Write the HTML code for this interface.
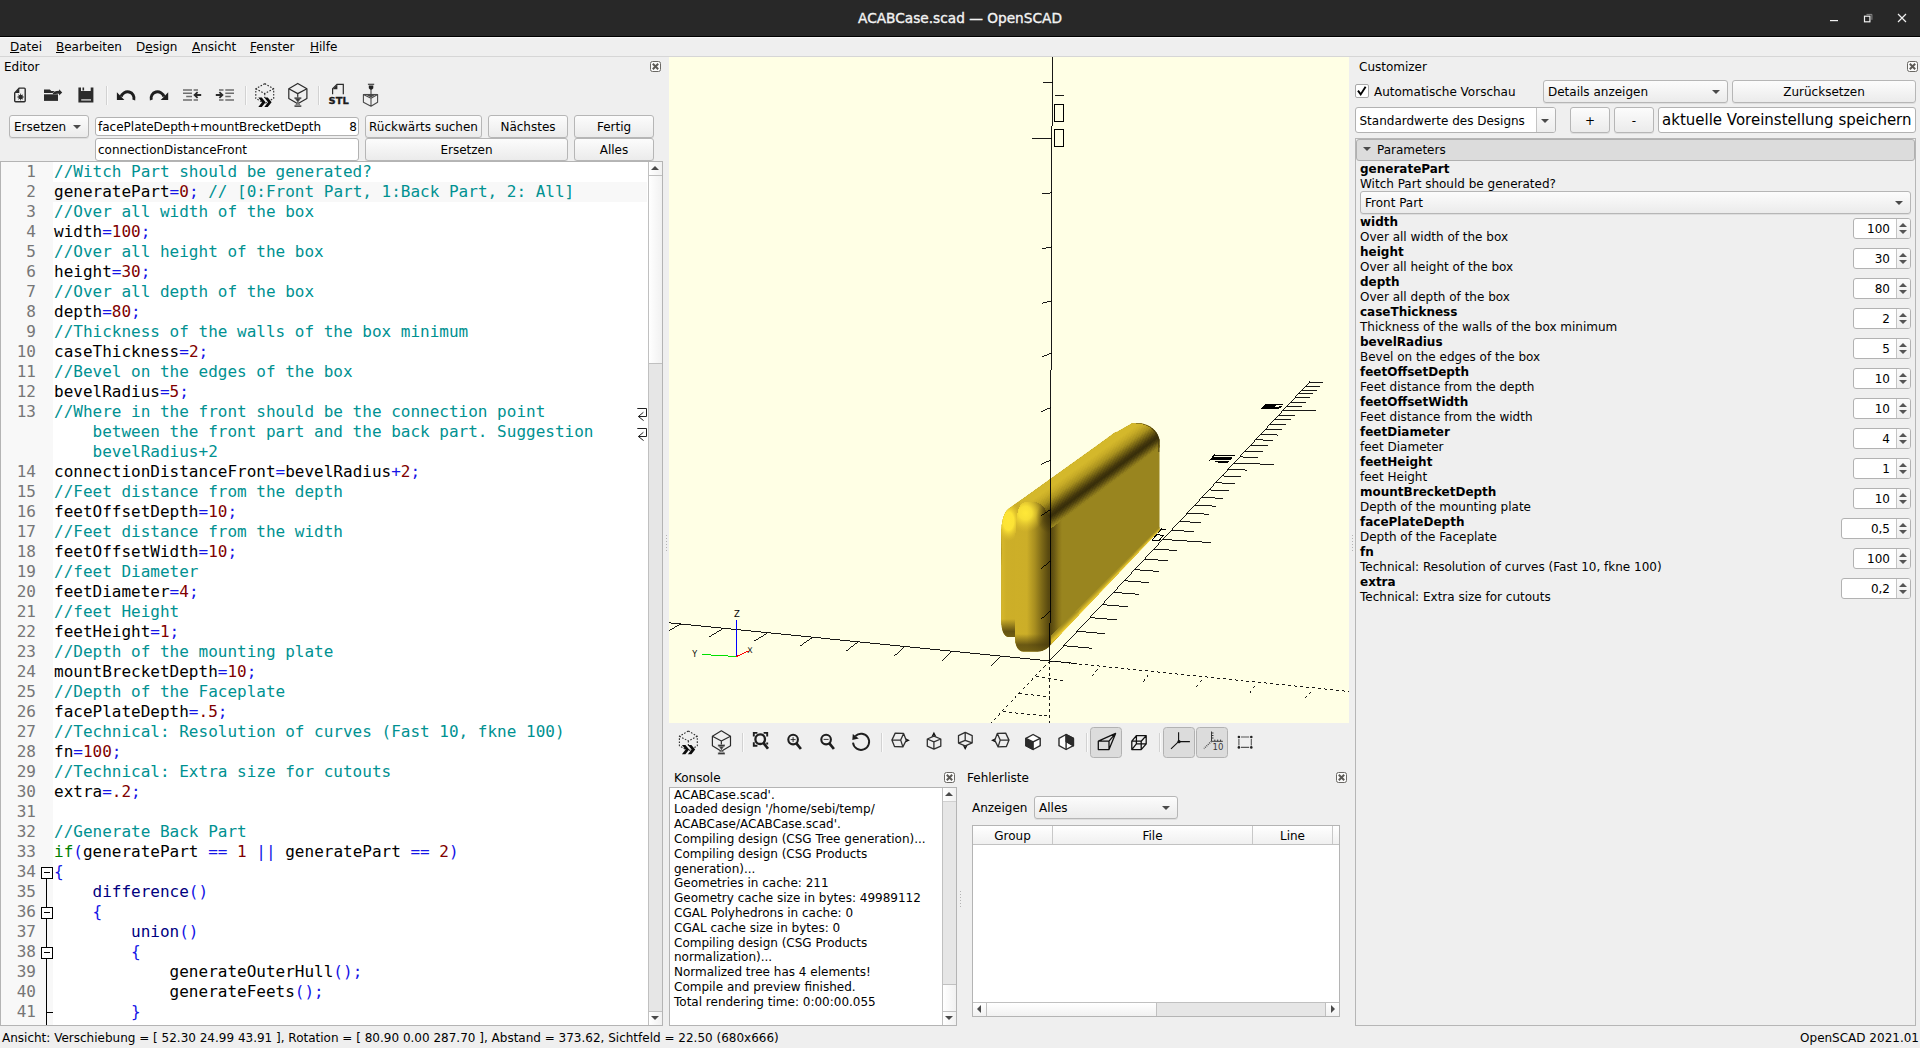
<!DOCTYPE html>
<html lang="de">
<head>
<meta charset="utf-8">
<title>ACABCase.scad — OpenSCAD</title>
<style>
*{box-sizing:border-box;margin:0;padding:0}
html,body{width:1920px;height:1048px;overflow:hidden;background:#efefef}
body{position:relative;font-family:"DejaVu Sans","Liberation Sans",sans-serif;font-size:12px;color:#000;line-height:15px}
.a{position:absolute;white-space:pre}
.t{position:absolute;white-space:pre;height:15px;line-height:15px;margin-top:1px}
u{text-decoration:underline;text-underline-offset:1px}
#titlebar{position:absolute;left:0;top:0;width:1920px;height:36px;background:#282828}
#titleline{position:absolute;left:0;top:36px;width:1920px;height:1px;background:#000}
#titletext{position:absolute;left:0;top:10px;width:1920px;text-align:center;color:#f3f3f3;font-family:"DejaVu Sans","Liberation Sans",sans-serif;font-size:13.7px;line-height:17px;-webkit-text-stroke:0.35px #f3f3f3}
#menusep{position:absolute;left:0;top:56px;width:1920px;height:1px;background:#d6d6d6}
.btn{position:absolute;border:1px solid #b6b6b6;border-radius:3px;background:linear-gradient(#fcfcfc,#ebebeb);box-shadow:0 1px 0 rgba(0,0,0,.07);text-align:center;white-space:pre;line-height:15px}
.edit{position:absolute;border:1px solid #b2b2b2;border-radius:3px;background:#fff;white-space:pre}
.closebox{position:absolute;width:11px;height:11px}
.frame{position:absolute;border:1px solid #b4b4b4;background:#fff}
.code{font-family:"DejaVu Sans Mono","Liberation Mono",monospace;font-size:16px;line-height:20px}
.ln{position:absolute;left:1px;width:34px;text-align:right;height:20px;color:#767676;white-space:pre}
.cl{position:absolute;left:53px;height:20px;white-space:pre;color:#000}
.c{color:#009191}.n{color:#7f0000}.o{color:#1414e6}.k{color:#007f00}.f{color:#00007f}
.tri-d{position:absolute;width:0;height:0;border-left:4px solid transparent;border-right:4px solid transparent;border-top:4px solid #4a4a4a}
.tri-u{position:absolute;width:0;height:0;border-left:4px solid transparent;border-right:4px solid transparent;border-bottom:4px solid #4a4a4a}
.pn{position:absolute;left:1360px;font-weight:bold;white-space:pre;height:15px;margin-top:1px}
.pd{position:absolute;left:1360px;white-space:pre;height:15px;margin-top:1px}
.spin{position:absolute;height:21px;border:1px solid #b2b2b2;border-radius:3px;background:#fff}
.spin .v{position:absolute;right:20px;top:3px;height:15px;white-space:pre;text-align:right}
.spin .s{position:absolute;right:0;top:0;width:14px;height:19px;border-left:1px solid #c4c4c4;background:linear-gradient(#fbfbfb,#ededed);border-radius:0 2px 2px 0}
</style>
</head>
<body>
<!-- window title bar -->
<div id="titlebar"></div><div id="titleline"></div>
<div id="titletext">ACABCase.scad — OpenSCAD</div>
<svg class="a" style="left:1826px;top:10px" width="90" height="16" viewBox="0 0 90 16">
<rect x="4" y="10" width="8" height="1.2" fill="#f0f0f0"/>
<path d="M40.5 4.4h5.4v5.4" fill="none" stroke="#8a8a8a" stroke-width="1"/>
<rect x="38.5" y="6.2" width="5.4" height="5.6" fill="none" stroke="#f0f0f0" stroke-width="1.2"/>
<path d="M72 4l8 8M80 4l-8 8" stroke="#f0f0f0" stroke-width="1.2" fill="none"/>
</svg>
<!-- menu bar -->
<div class="a" style="left:0;top:37px;width:1920px;height:1px;background:#fafafa"></div>
<div class="t" style="left:10px;top:39px"><u>D</u>atei</div>
<div class="t" style="left:56px;top:39px"><u>B</u>earbeiten</div>
<div class="t" style="left:136px;top:39px">D<u>e</u>sign</div>
<div class="t" style="left:192px;top:39px"><u>A</u>nsicht</div>
<div class="t" style="left:250px;top:39px"><u>F</u>enster</div>
<div class="t" style="left:310px;top:39px"><u>H</u>ilfe</div>
<div id="menusep"></div>
<!-- status bar -->
<div class="t" style="left:2px;top:1030px">Ansicht: Verschiebung = [ 52.30 24.99 43.91 ], Rotation = [ 80.90 0.00 287.70 ], Abstand = 373.62, Sichtfeld = 22.50 (680x666)</div>
<div class="t" style="right:1px;top:1030px">OpenSCAD 2021.01</div>
<!-- editor toolbar -->
<svg class="a" style="left:0;top:78px" width="400" height="34" viewBox="0 78 400 34">
<g fill="none" stroke="#2b2b2b" stroke-width="1.4" stroke-linejoin="round" stroke-linecap="butt">
<!-- new -->
<path d="M19.3 88.1H24.2a1 1 0 0 1 1 1V100.7a1 1 0 0 1 -1 1H15.7a1 1 0 0 1 -1 -1V92.9Z"/>
<path d="M19.3 88.6V92.9H15.2Z" fill="#2b2b2b" stroke="none"/>
<circle cx="20.6" cy="97" r="2.3" fill="#2b2b2b" stroke="none"/>
<path d="M20.6 93.6V100.4M17.2 97H24M18.2 94.6L23 99.4M23 94.6L18.2 99.4" stroke-width="0.8"/>
<!-- open -->
<path d="M44 89.4H49.8L51.3 90.9H54.6L52.6 93H44Z" fill="#2b2b2b" stroke="none"/>
<path d="M44 94.3H58V100.9H44Z" fill="#2b2b2b" stroke="none"/>
<path d="M52.7 93.6C53.4 91.7 55.2 90.8 59.1 90.7V89.2L62.2 92.4L59.1 95.4V93.8C56.2 93.8 54.8 93.9 53.5 94.5Z" fill="#2b2b2b" stroke="none"/>
<!-- save -->
<path d="M78.4 87.4H81V91.1H90.7V87.4H93.4V102.4H78.4Z" fill="#2b2b2b" stroke="none"/>
<rect x="82.5" y="87.5" width="1.6" height="3" fill="#2b2b2b" stroke="none"/>
<rect x="81.2" y="99.2" width="9.8" height="1.4" fill="#cfcfcf" stroke="none"/>
</g>
<!-- separators -->
<g>
<rect x="106" y="86" width="1" height="19" fill="#d2d2d2"/><rect x="107" y="86" width="1" height="19" fill="#fafafa"/>
<rect x="245" y="86" width="1" height="19" fill="#d2d2d2"/><rect x="246" y="86" width="1" height="19" fill="#fafafa"/>
<rect x="318" y="86" width="1" height="19" fill="#d2d2d2"/><rect x="319" y="86" width="1" height="19" fill="#fafafa"/>
</g>
<!-- undo / redo -->
<g fill="none" stroke="#1e1e1e" stroke-width="2.9">
<path d="M121.2 96.6A6.2 6.2 0 0 1 133.8 100"/>
<path d="M163.9 96.6A6.2 6.2 0 0 0 151.3 100"/>
</g>
<path d="M116.9 92.2V99.9H124.4Z" fill="#1e1e1e"/>
<path d="M168.2 92.2V99.9H160.7Z" fill="#1e1e1e"/>
<!-- unindent -->
<g stroke="#6e6e6e" stroke-width="1.5" fill="none">
<path d="M183 90H192M193.6 90H198M183 93.3H192M186.2 96.5H192M183 99.9H192M193.6 99.9H198"/>
<path d="M225.3 90H234M219 90H223.5M225.3 93.3H234M225.3 96.5H230.8M225.3 99.9H234M219 99.9H223.5"/>
</g>
<g stroke="#2b2b2b" stroke-width="1.8" fill="none">
<path d="M201.2 95H195M197.6 92.2L194.6 95L197.6 97.8"/>
<path d="M215.8 95H222M219.4 92.2L222.4 95L219.4 97.8"/>
</g>
<!-- preview -->
<g fill="none" stroke="#2b2b2b" stroke-width="1.1" stroke-dasharray="1.6 1.5">
<path d="M264.75 83.6L273.7 88.8V98.4L264.75 103.6L255.8 98.4V88.8Z"/>
<path d="M255.8 88.8L264.75 93.6L273.7 88.8M264.75 93.6V98"/>
</g>
<path d="M258.3 97.6H261.8L265.6 102.2L261.8 106.9H258.3L262 102.2ZM264.3 97.6H267.8L271.6 102.2L267.8 106.9H264.3L268 102.2Z" fill="#0c0c0c"/>
<!-- render -->
<g fill="none" stroke="#2b2b2b" stroke-width="1.2" stroke-linejoin="round">
<path d="M297.75 83.4L306.9 88.8V98.4L297.75 103.8L288.8 98.4V88.8Z"/>
<path d="M288.8 88.8L297.75 93.6L306.9 88.8M297.75 93.6V98"/>
</g>
<path d="M294.3 97.2H301.4V99H294.3ZM294.3 105.2H301.4V107H294.3Z" fill="#2b2b2b" stroke="#efefef" stroke-width="0.4"/><path d="M295.6 99H300.1L297.85 102.1Z" fill="#3a3a3a"/><path d="M297.85 102.1L300.1 105.2H295.6Z" fill="#8a8a8a"/><path d="M295.6 99L300.1 105.2M300.1 99L295.6 105.2" stroke="#555" stroke-width="0.7" fill="none"/>
<!-- STL -->
<path d="M332.6 94.3V88.8L337 84.4H343.3V94.3" fill="none" stroke="#2b2b2b" stroke-width="1.2"/>
<path d="M337.4 84.6V89.2H332.8Z" fill="#2b2b2b"/>
<text x="328.6" y="104.3" font-family="DejaVu Sans,Liberation Sans,sans-serif" font-weight="bold" font-size="9.3" textLength="20.2" lengthAdjust="spacingAndGlyphs" fill="#1c1c1c" stroke="#1c1c1c" stroke-width="0.3">STL</text>
<!-- 3d print -->
<g fill="none" stroke="#4a4a4a" stroke-width="1.1" stroke-linejoin="round">
<path d="M363.4 94.5L371 98.2L377.6 94.5V102.2L371 106.2L363.4 102.2ZM371 98.2V106.2"/>
<path d="M363.4 94.5H377.6"/>
</g>
<path d="M365.6 94.6H375.6L371 97.4Z" fill="#4a4a4a"/>
<path d="M367.9 83.8H374.2V84.8H367.9ZM368.8 85.6H373.3V88.2L371.8 89.8H370.3L368.8 88.2Z" fill="#222"/>
<path d="M371 89.5V94.5" stroke="#333" stroke-width="1"/>
</svg>
<!-- editor dock -->
<div class="t" style="left:4px;top:59px">Editor</div>
<svg class="closebox" style="left:650px;top:61px" width="11" height="11" viewBox="0 0 11 11"><rect x="0.5" y="0.5" width="10" height="10" rx="2" ry="2" fill="#fbfbfb" stroke="#6a6864" stroke-width="1"/><path d="M2.8 2.8L8.2 8.2M8.2 2.8L2.8 8.2" stroke="#5c5a56" stroke-width="2" fill="none"/></svg>
<div class="btn" style="left:9px;top:115px;width:80px;height:23px;text-align:left;padding:4px 0 0 4px">Ersetzen</div><div class="tri-d" style="left:73px;top:125px"></div>
<div class="edit" style="left:95px;top:117px;width:264px;height:19px;padding:2px 0 0 2px;line-height:15px">facePlateDepth+mountBrecketDepth<span class="a" style="right:1px;top:2px">8</span></div>
<div class="edit" style="left:95px;top:138px;width:264px;height:23px;padding:4px 0 0 2px;line-height:15px">connectionDistanceFront</div>
<div class="btn" style="left:365px;top:115px;width:117px;height:23px;padding-top:4px">Rückwärts suchen</div>
<div class="btn" style="left:488px;top:115px;width:80px;height:23px;padding-top:4px">Nächstes</div>
<div class="btn" style="left:574px;top:115px;width:80px;height:23px;padding-top:4px">Fertig</div>
<div class="btn" style="left:365px;top:138px;width:203px;height:23px;padding-top:4px">Ersetzen</div>
<div class="btn" style="left:574px;top:138px;width:80px;height:23px;padding-top:4px">Alles</div>
<div class="frame code" style="left:0;top:161px;width:663px;height:865px;overflow:hidden">
<div class="a" style="left:0;top:0;width:52px;height:863px;background:#f8f8f8"></div>
<div class="a" style="left:52px;top:20px;width:594px;height:20px;background:#f8f8f8"></div>
<div class="ln" style="top:0px">1</div>
<div class="cl" style="top:0px"><span class="c">//Witch Part should be generated?</span></div>
<div class="ln" style="top:20px">2</div>
<div class="cl" style="top:20px">generatePart<span class="o">=</span><span class="n">0</span><span class="o">;</span> <span class="c">// [0:Front Part, 1:Back Part, 2: All]</span></div>
<div class="ln" style="top:40px">3</div>
<div class="cl" style="top:40px"><span class="c">//Over all width of the box</span></div>
<div class="ln" style="top:60px">4</div>
<div class="cl" style="top:60px">width<span class="o">=</span><span class="n">100</span><span class="o">;</span></div>
<div class="ln" style="top:80px">5</div>
<div class="cl" style="top:80px"><span class="c">//Over all height of the box</span></div>
<div class="ln" style="top:100px">6</div>
<div class="cl" style="top:100px">height<span class="o">=</span><span class="n">30</span><span class="o">;</span></div>
<div class="ln" style="top:120px">7</div>
<div class="cl" style="top:120px"><span class="c">//Over all depth of the box</span></div>
<div class="ln" style="top:140px">8</div>
<div class="cl" style="top:140px">depth<span class="o">=</span><span class="n">80</span><span class="o">;</span></div>
<div class="ln" style="top:160px">9</div>
<div class="cl" style="top:160px"><span class="c">//Thickness of the walls of the box minimum</span></div>
<div class="ln" style="top:180px">10</div>
<div class="cl" style="top:180px">caseThickness<span class="o">=</span><span class="n">2</span><span class="o">;</span></div>
<div class="ln" style="top:200px">11</div>
<div class="cl" style="top:200px"><span class="c">//Bevel on the edges of the box</span></div>
<div class="ln" style="top:220px">12</div>
<div class="cl" style="top:220px">bevelRadius<span class="o">=</span><span class="n">5</span><span class="o">;</span></div>
<div class="ln" style="top:240px">13</div>
<div class="cl" style="top:240px"><span class="c">//Where in the front should be the connection point </span></div>
<div class="cl" style="top:260px"><span class="c">    between the front part and the back part. Suggestion </span></div>
<div class="cl" style="top:280px"><span class="c">    bevelRadius+2</span></div>
<div class="ln" style="top:300px">14</div>
<div class="cl" style="top:300px">connectionDistanceFront<span class="o">=</span>bevelRadius<span class="o">+</span><span class="n">2</span><span class="o">;</span></div>
<div class="ln" style="top:320px">15</div>
<div class="cl" style="top:320px"><span class="c">//Feet distance from the depth</span></div>
<div class="ln" style="top:340px">16</div>
<div class="cl" style="top:340px">feetOffsetDepth<span class="o">=</span><span class="n">10</span><span class="o">;</span></div>
<div class="ln" style="top:360px">17</div>
<div class="cl" style="top:360px"><span class="c">//Feet distance from the width</span></div>
<div class="ln" style="top:380px">18</div>
<div class="cl" style="top:380px">feetOffsetWidth<span class="o">=</span><span class="n">10</span><span class="o">;</span></div>
<div class="ln" style="top:400px">19</div>
<div class="cl" style="top:400px"><span class="c">//feet Diameter</span></div>
<div class="ln" style="top:420px">20</div>
<div class="cl" style="top:420px">feetDiameter<span class="o">=</span><span class="n">4</span><span class="o">;</span></div>
<div class="ln" style="top:440px">21</div>
<div class="cl" style="top:440px"><span class="c">//feet Height</span></div>
<div class="ln" style="top:460px">22</div>
<div class="cl" style="top:460px">feetHeight<span class="o">=</span><span class="n">1</span><span class="o">;</span></div>
<div class="ln" style="top:480px">23</div>
<div class="cl" style="top:480px"><span class="c">//Depth of the mounting plate</span></div>
<div class="ln" style="top:500px">24</div>
<div class="cl" style="top:500px">mountBrecketDepth<span class="o">=</span><span class="n">10</span><span class="o">;</span></div>
<div class="ln" style="top:520px">25</div>
<div class="cl" style="top:520px"><span class="c">//Depth of the Faceplate</span></div>
<div class="ln" style="top:540px">26</div>
<div class="cl" style="top:540px">facePlateDepth<span class="o">=</span><span class="n">.5</span><span class="o">;</span></div>
<div class="ln" style="top:560px">27</div>
<div class="cl" style="top:560px"><span class="c">//Technical: Resolution of curves (Fast 10, fkne 100)</span></div>
<div class="ln" style="top:580px">28</div>
<div class="cl" style="top:580px">fn<span class="o">=</span><span class="n">100</span><span class="o">;</span></div>
<div class="ln" style="top:600px">29</div>
<div class="cl" style="top:600px"><span class="c">//Technical: Extra size for cutouts</span></div>
<div class="ln" style="top:620px">30</div>
<div class="cl" style="top:620px">extra<span class="o">=</span><span class="n">.2</span><span class="o">;</span></div>
<div class="ln" style="top:640px">31</div>
<div class="ln" style="top:660px">32</div>
<div class="cl" style="top:660px"><span class="c">//Generate Back Part</span></div>
<div class="ln" style="top:680px">33</div>
<div class="cl" style="top:680px"><span class="k">if</span><span class="o">(</span>generatePart <span class="o">==</span> <span class="n">1</span> <span class="o">||</span> generatePart <span class="o">==</span> <span class="n">2</span><span class="o">)</span></div>
<div class="ln" style="top:700px">34</div>
<div class="cl" style="top:700px"><span class="o">{</span></div>
<div class="ln" style="top:720px">35</div>
<div class="cl" style="top:720px">    <span class="f">difference</span><span class="o">()</span></div>
<div class="ln" style="top:740px">36</div>
<div class="cl" style="top:740px">    <span class="o">{</span></div>
<div class="ln" style="top:760px">37</div>
<div class="cl" style="top:760px">        <span class="f">union</span><span class="o">()</span></div>
<div class="ln" style="top:780px">38</div>
<div class="cl" style="top:780px">        <span class="o">{</span></div>
<div class="ln" style="top:800px">39</div>
<div class="cl" style="top:800px">            generateOuterHull<span class="o">();</span></div>
<div class="ln" style="top:820px">40</div>
<div class="cl" style="top:820px">            generateFeets<span class="o">();</span></div>
<div class="ln" style="top:840px">41</div>
<div class="cl" style="top:840px">        <span class="o">}</span></div>
<svg class="a" style="left:636px;top:245px" width="11" height="15" viewBox="0 0 11 15"><path d="M0.3 1.5H9.5V9.5H1.4M6.4 5.3L1.4 9.5L6.6 13.6" fill="none" stroke="#222" stroke-width="1"/></svg>
<svg class="a" style="left:636px;top:265px" width="11" height="15" viewBox="0 0 11 15"><path d="M0.3 1.5H9.5V9.5H1.4M6.4 5.3L1.4 9.5L6.6 13.6" fill="none" stroke="#222" stroke-width="1"/></svg>
<div class="a" style="left:45px;top:710px;width:1px;height:153px;background:#000"></div>
<div class="a" style="left:40px;top:705px;width:12px;height:12px;border:1px solid #000;background:#fff"></div><div class="a" style="left:43px;top:710px;width:6px;height:1px;background:#000"></div>
<div class="a" style="left:40px;top:745px;width:12px;height:12px;border:1px solid #000;background:#fff"></div><div class="a" style="left:43px;top:750px;width:6px;height:1px;background:#000"></div>
<div class="a" style="left:40px;top:785px;width:12px;height:12px;border:1px solid #000;background:#fff"></div><div class="a" style="left:43px;top:790px;width:6px;height:1px;background:#000"></div>
<div class="a" style="left:45px;top:850px;width:7px;height:1px;background:#000"></div>
<div class="a" style="left:647px;top:-1px;width:15px;height:865px;border:1px solid #c0c0c0;background:#e6e6e6"></div>
<div class="a" style="left:648px;top:0;width:13px;height:14px;background:linear-gradient(90deg,#fff,#f1f1f1);border-bottom:1px solid #c0c0c0"></div>
<div class="a" style="left:648px;top:14px;width:13px;height:188px;background:linear-gradient(90deg,#fff,#f1f1f1);border-bottom:1px solid #c0c0c0"></div>
<div class="a" style="left:648px;top:849px;width:13px;height:14px;background:linear-gradient(90deg,#fff,#f1f1f1);border-top:1px solid #c0c0c0"></div>
<div class="tri-u" style="left:650px;top:4px"></div><div class="tri-d" style="left:650px;top:854px"></div>
</div>
<!-- 3D viewport -->
<svg class="a" style="left:669px;top:57px" width="680" height="666" viewBox="669 57 680 666">
<rect x="669" y="57" width="680" height="666" fill="#ffffe5"/>
<path d="M1049.5 661L669 622.8M1000.4 656.2L991 665.6M951.5 651.7L942 660.8M903.5 646.9L893.5 655.8M857.7 642.3L846.2 651M811.9 637.9L800.4 645.8M767 633.3L754.2 641.2M723.3 628.5L709.2 636.9M680.6 624L668.8 630.8M1049.5 661L1310.5 380.9M1049.5 661L1076.5 663.7M1063.8 645.7L1092.4 648.3M1077.2 631.2L1105.1 633.7M1090 617.6L1117.1 619.9M1102 604.6L1128.4 606.8M1113.5 592.4L1139.2 594.4M1124.3 580.7L1149.4 582.7M1134.7 569.6L1159.1 571.5M1144.5 559.1L1168.3 560.8M1153.9 549L1177.2 550.6M1162.8 539.4L1211.4 542.6M1171.4 530.2L1193.6 531.6M1179.5 521.4L1201.3 522.8M1187.4 513L1208.7 514.3M1194.9 505L1215.7 506.2M1202.1 497.3L1222.5 498.4M1209 489.9L1229 490.9M1215.6 482.7L1235.2 483.7M1222 475.9L1241.2 476.8M1228.1 469.3L1247 470.1M1234 463L1273.6 464.5M1239.7 456.9L1257.9 457.5M1245.2 451L1263.1 451.6M1250.5 445.3L1268 445.8M1255.6 439.8L1272.8 440.3M1260.5 434.5L1277.5 435M1265.3 429.4L1282 429.8M1269.9 424.5L1286.3 424.8M1274.4 419.7L1290.5 419.9M1278.7 415L1294.6 415.2M1282.9 410.5L1316.3 410.9M1286.9 406.2L1302.3 406.3M1290.9 402L1306 402M1294.7 397.9L1309.6 397.9M1298.4 393.9L1313.1 393.9M1302 390L1316.5 390M1305.5 386.3L1319.8 386.3M1308.9 382.6L1323 382.6" fill="none" stroke="#000" stroke-width="0.9" shape-rendering="crispEdges"/>
<path d="M1049.5 661L1349 691.5M1097.5 669.4L1092.3 675.8M1148.5 674.6L1143.3 681.5M1201.7 680L1196.5 686.7M1254.8 685.6L1250.2 692.5M1310 691.5L1305.4 697.7M1049.5 661L1049.5 723M1049.5 661L991 723M1036 676L1065 681M1019.4 693.3L1049.6 697M1002.7 711.7L1046.5 716" fill="none" stroke="#000" stroke-width="0.9" shape-rendering="crispEdges" stroke-dasharray="3 3"/>
<path d="M1214 455.5H1235M1212 457.5H1232M1212 458.5H1232M1210 459.5H1231M1215 461.5H1229M1218 462.5H1228M1208.5 461.5L1215 454.5" fill="none" stroke="#000" stroke-width="1" shape-rendering="crispEdges"/>
<path d="M1265 404.5H1283M1264 405.5H1276M1263 406.5H1275M1279 406.5H1282M1262 407.5H1281M1261 408.5H1279" fill="none" stroke="#000" stroke-width="1" shape-rendering="crispEdges"/>
<path d="M1152 540L1157 534.5L1163.5 535.5L1159 540.5ZM1158 532.5L1161.5 529L1166 530" fill="none" stroke="#000" stroke-width="1" shape-rendering="crispEdges"/>
<defs>
<clipPath id="mclip"><path d="M1001.2 533C1001.6 520 1004 512.5 1008.6 508.7L1100 443.3L1114.7 432.6L1117.5 431.6L1132 423.2H1141C1150 424.5 1158 431 1159.5 440V530.5L1049.5 646C1046 650 1041 651.6 1037 651.6H1024C1019 651.6 1016.5 648 1015.3 642V637H1008C1004 636 1001.6 631 1001.2 622Z"/></clipPath>
<linearGradient id="l2" gradientUnits="userSpaceOnUse" x1="1015" y1="0" x2="1051" y2="0"><stop offset="0" stop-color="#cdaf28"/><stop offset=".33" stop-color="#ccae28"/><stop offset=".55" stop-color="#a88e20"/><stop offset=".75" stop-color="#7c6817"/><stop offset=".92" stop-color="#5a4a10"/><stop offset="1" stop-color="#54450e"/></linearGradient>
<linearGradient id="l1" gradientUnits="userSpaceOnUse" x1="1001" y1="0" x2="1016" y2="0"><stop offset="0" stop-color="#d8b82a"/><stop offset=".35" stop-color="#cdaf28"/><stop offset="1" stop-color="#ccae28"/></linearGradient>
<radialGradient id="h2" gradientUnits="userSpaceOnUse" cx="1025.5" cy="513" r="19"><stop offset="0" stop-color="#ffe838"/><stop offset=".35" stop-color="#ffe838" stop-opacity=".85"/><stop offset="1" stop-color="#e6c62e" stop-opacity="0"/></radialGradient>
<radialGradient id="h1" gradientUnits="userSpaceOnUse" cx="1008.5" cy="521" r="20" gradientTransform="translate(1008.5 521) scale(.6 1) translate(-1008.5 -521)"><stop offset="0" stop-color="#ffe636"/><stop offset=".45" stop-color="#ffe636" stop-opacity=".95"/><stop offset="1" stop-color="#e6c62e" stop-opacity="0"/></radialGradient>
<linearGradient id="b2" gradientUnits="userSpaceOnUse" x1="0" y1="634" x2="0" y2="652"><stop offset="0" stop-color="#4a3c0c" stop-opacity="0"/><stop offset=".6" stop-color="#4a3c0c" stop-opacity=".75"/><stop offset="1" stop-color="#6b5a12" stop-opacity=".9"/></linearGradient>
<linearGradient id="b1" gradientUnits="userSpaceOnUse" x1="0" y1="619" x2="0" y2="638"><stop offset="0" stop-color="#4a3c0c" stop-opacity="0"/><stop offset=".65" stop-color="#4a3c0c" stop-opacity=".8"/><stop offset="1" stop-color="#6b5a12" stop-opacity=".9"/></linearGradient>
<linearGradient id="be" gradientUnits="userSpaceOnUse" x1="1100" y1="584" x2="1105.5" y2="589.2"><stop offset="0" stop-color="#99851f"/><stop offset=".3" stop-color="#b89b23"/><stop offset=".6" stop-color="#d9ba2b"/><stop offset="1" stop-color="#f2d231"/></linearGradient>
<linearGradient id="ve" gradientUnits="userSpaceOnUse" x1="1050.5" y1="0" x2="1062" y2="0"><stop offset="0" stop-color="#54450e"/><stop offset=".35" stop-color="#6b5a14"/><stop offset=".7" stop-color="#8a7519"/><stop offset="1" stop-color="#99851f"/></linearGradient>
<radialGradient id="sh" gradientUnits="userSpaceOnUse" cx="1053" cy="517" r="17"><stop offset="0" stop-color="#3a2f0a" stop-opacity=".9"/><stop offset=".45" stop-color="#3a2f0a" stop-opacity=".55"/><stop offset="1" stop-color="#3a2f0a" stop-opacity="0"/></radialGradient>
</defs>
<g clip-path="url(#mclip)" shape-rendering="crispEdges">
<path d="M1001.2 533C1001.6 520 1004 512.5 1008.6 508.7L1100 443.3L1114.7 432.6L1117.5 431.6L1132 423.2H1141C1150 424.5 1158 431 1159.5 440V530.5L1049.5 646C1046 650 1041 651.6 1037 651.6H1024C1019 651.6 1016.5 648 1015.3 642V637H1008C1004 636 1001.6 631 1001.2 622Z" fill="#99851f"/>
<path d="M1050.5 500H1062V650H1050.5Z" fill="url(#ve)"/>
<path d="M995 508.4L1166 386.5L1166 398L995 520.1" fill="#d4b82b"/>
<path d="M995 519.7L1166 397.6L1166 399.1L995 521.3" fill="#d4b82b"/>
<path d="M995 521L1166 398.8L1166 400.3L995 522.6" fill="#d4b82b"/>
<path d="M995 522.2L1166 399.9L1166 401.4L995 523.9" fill="#d4b82b"/>
<path d="M995 523.5L1166 401.1L1166 402.6L995 525.2" fill="#d4b82b"/>
<path d="M995 524.8L1166 402.3L1166 403.8L995 526.5" fill="#d4b82b"/>
<path d="M995 526.1L1166 403.4L1166 404.9L995 527.7" fill="#d4b82b"/>
<path d="M995 527.4L1166 404.6L1166 406.1L995 529" fill="#d2b62a"/>
<path d="M995 528.6L1166 405.7L1166 407.2L995 530.3" fill="#cfb329"/>
<path d="M995 529.9L1166 406.9L1166 408.4L995 531.6" fill="#ccb028"/>
<path d="M995 531.2L1166 408L1166 409.5L995 532.9" fill="#c9ad27"/>
<path d="M995 532.5L1166 409.2L1166 410.7L995 534.1" fill="#c5aa26"/>
<path d="M995 533.8L1166 410.3L1166 411.8L995 535.4" fill="#c0a524"/>
<path d="M995 535L1166 411.5L1166 413L995 536.7" fill="#baa023"/>
<path d="M995 536.3L1166 412.7L1166 414.2L995 538" fill="#b59b21"/>
<path d="M995 537.6L1166 413.8L1166 415.3L995 539.3" fill="#af9720"/>
<path d="M995 538.9L1166 415L1166 416.5L995 540.5" fill="#aa921e"/>
<path d="M995 540.2L1166 416.1L1166 417.6L995 541.8" fill="#a18a1d"/>
<path d="M995 541.4L1166 417.3L1166 418.8L995 543.1" fill="#97811a"/>
<path d="M995 542.7L1166 418.4L1166 419.9L995 544.4" fill="#8d7818"/>
<path d="M995 544L1166 419.6L1166 421.1L995 545.7" fill="#836f16"/>
<path d="M995 545.3L1166 420.7L1166 422.2L995 546.9" fill="#796714"/>
<path d="M995 546.5L1166 421.9L1166 423.4L995 548.2" fill="#6f5e12"/>
<path d="M995 547.8L1166 423.1L1166 424.6L995 549.5" fill="#655511"/>
<path d="M995 549.1L1166 424.2L1166 425.7L995 550.8" fill="#5c4d0f"/>
<path d="M995 550.4L1166 425.4L1166 426.9L995 552.1" fill="#53450e"/>
<path d="M995 551.7L1166 426.5L1166 428L995 553.3" fill="#4a3d0d"/>
<path d="M995 552.9L1166 427.7L1166 429.2L995 554.6" fill="#42360c"/>
<path d="M995 554.2L1166 428.8L1166 430.3L995 555.9" fill="#3e330b"/>
<path d="M995 555.5L1166 430L1166 431.5L995 557.2" fill="#392f0a"/>
<path d="M995 556.8L1166 431.1L1166 432.6L995 558.5" fill="#392f0a"/>
<path d="M995 558.1L1166 432.3L1166 433.8L995 559.7" fill="#41360b"/>
<path d="M995 559.3L1166 433.5L1166 435L995 561" fill="#493d0d"/>
<path d="M995 560.6L1166 434.6L1166 436.1L995 562.3" fill="#52450f"/>
<path d="M995 561.9L1166 435.8L1166 437.3L995 563.6" fill="#5e5011"/>
<path d="M995 563.2L1166 436.9L1166 438.4L995 564.9" fill="#6a5a14"/>
<path d="M995 564.5L1166 438.1L1166 439.6L995 566.1" fill="#766516"/>
<path d="M995 565.7L1166 439.2L1166 440.7L995 567.4" fill="#806e19"/>
<path d="M995 567L1166 440.4L1166 441.9L995 568.7" fill="#8b781b"/>
<path d="M995 568.3L1166 441.5L1166 443L995 570" fill="#95821e"/>
<path d="M1136 421.5H1141C1151 423 1158.5 430 1160.5 441V452" fill="none" stroke="#3a2f0a" stroke-width="5" stroke-opacity=".55"/>
<path d="M1044 642L1161 525L1161 525.6L1044 643.4" fill="#9e8920"/>
<path d="M1044 643.2L1161 525.5L1161 526.1L1044 644.6" fill="#a68f21"/>
<path d="M1044 644.4L1161 526L1161 526.6L1044 645.9" fill="#ae9622"/>
<path d="M1044 645.7L1161 526.5L1161 527L1044 647.1" fill="#baa024"/>
<path d="M1044 646.9L1161 527L1161 527.5L1044 648.3" fill="#c7ab27"/>
<path d="M1044 648.1L1161 527.5L1161 528L1044 649.5" fill="#d4b62a"/>
<path d="M1044 649.3L1161 527.9L1161 528.5L1044 650.7" fill="#dfbf2c"/>
<path d="M1044 650.6L1161 528.4L1161 531.3L1044 657.6" fill="#eecd2f"/>
<path d="M1000 540V505L1020 498V640H1000Z" fill="url(#l1)"/>
<path d="M1000 540V505L1020 498V640H1000Z" fill="url(#h1)"/>
<path d="M1000 619H1016V640H1000Z" fill="url(#b1)"/>
<path d="M1015.3 653V540C1015.6 520 1017.5 509 1020.5 505C1022 503 1024 502 1026 502H1035C1041 502.5 1046.5 508 1050.8 522V653Z" fill="url(#l2)"/>
<path d="M1015.3 653V540C1015.6 520 1017.5 509 1020.5 505C1022 503 1024 502 1026 502H1035C1041 502.5 1046.5 508 1050.8 522V653Z" fill="url(#h2)"/>
<path d="M1015.3 653V540C1015.6 520 1017.5 509 1020.5 505C1022 503 1024 502 1026 502H1035C1041 502.5 1046.5 508 1050.8 522V653Z" fill="url(#sh)"/>
<path d="M1015.3 634H1050V653H1015.3Z" fill="url(#b2)"/>
</g>
<path d="M1052.5 57L1052.5 126M1051.5 126L1051.5 370M1050.5 370L1050.5 623M1049.5 623L1049.5 661M1041 619.3L1050.5 611M1041 568.7L1050.5 561.2M1041 516L1050.5 509.5M1041 464.4L1050.5 460.2M1041 411.8L1050.5 407.7M1042 356.6L1051.5 353.3M1042 303.3L1051.5 300.8M1042 248.9L1051.5 246.9M1042 193.9L1051.5 192.9M1043 82.4L1052.5 82.4M1032 138.5L1051.5 138.5M1054.5 95.7L1064 95.7" fill="none" stroke="#000" stroke-width="0.9" shape-rendering="crispEdges"/>
<path d="M1054.5 104.5H1063.5V121.5H1054.5ZM1054.5 129.5H1063.5V146.5H1054.5Z" fill="none" stroke="#000" stroke-width="1" shape-rendering="crispEdges"/>
<path d="M736.5 620V656.5" stroke="#0000ff" stroke-width="1" shape-rendering="crispEdges"/>
<path d="M702 654.5L736.5 656.5" stroke="#00e000" stroke-width="1" shape-rendering="crispEdges"/>
<path d="M736.5 656.5L748.5 651" stroke="#ff0000" stroke-width="1" shape-rendering="crispEdges"/>
<g font-family="DejaVu Sans,Liberation Sans,sans-serif" font-size="8.5" fill="#000"><text x="734" y="616.8">Z</text><text x="747.3" y="652.9" font-size="7.8">X</text><text x="692.2" y="656.8" font-size="8">Y</text></g>
</svg>
<!-- viewport toolbar -->
<svg class="a" style="left:669px;top:724px" width="690" height="40" viewBox="669 724 690 40">
<!-- checked button backgrounds -->
<g fill="#dcdcdc" stroke="#b2b2b2" stroke-width="1">
<rect x="1090.5" y="727.5" width="31" height="30" rx="3"/>
<rect x="1163.5" y="727.5" width="31" height="30" rx="3"/>
<rect x="1196.5" y="727.5" width="31" height="30" rx="3"/>
</g>
<!-- separators -->
<g>
<rect x="742" y="733" width="1" height="19" fill="#d2d2d2"/><rect x="743" y="733" width="1" height="19" fill="#fafafa"/>
<rect x="881" y="733" width="1" height="19" fill="#d2d2d2"/><rect x="882" y="733" width="1" height="19" fill="#fafafa"/>
<rect x="1086" y="733" width="1" height="19" fill="#d2d2d2"/><rect x="1087" y="733" width="1" height="19" fill="#fafafa"/>
<rect x="1159" y="733" width="1" height="19" fill="#d2d2d2"/><rect x="1160" y="733" width="1" height="19" fill="#fafafa"/>
</g>
<!-- preview / render (same as editor toolbar, shifted) -->
<g transform="translate(423.6 647.4)">
<g fill="none" stroke="#2b2b2b" stroke-width="1.1" stroke-dasharray="1.6 1.5">
<path d="M264.75 83.6L273.7 88.8V98.4L264.75 103.6L255.8 98.4V88.8Z"/>
<path d="M255.8 88.8L264.75 93.6L273.7 88.8M264.75 93.6V98"/>
</g>
<path d="M258.3 97.6H261.8L265.6 102.2L261.8 106.9H258.3L262 102.2ZM264.3 97.6H267.8L271.6 102.2L267.8 106.9H264.3L268 102.2Z" fill="#0c0c0c"/>
<g fill="none" stroke="#2b2b2b" stroke-width="1.2" stroke-linejoin="round">
<path d="M297.75 83.4L306.9 88.8V98.4L297.75 103.8L288.8 98.4V88.8Z"/>
<path d="M288.8 88.8L297.75 93.6L306.9 88.8M297.75 93.6V98"/>
</g>
<path d="M294.3 97.2H301.4V99H294.3ZM294.3 105.2H301.4V107H294.3Z" fill="#2b2b2b" stroke="#efefef" stroke-width="0.4"/><path d="M295.6 99H300.1L297.85 102.1Z" fill="#3a3a3a"/><path d="M297.85 102.1L300.1 105.2H295.6Z" fill="#8a8a8a"/><path d="M295.6 99L300.1 105.2M300.1 99L295.6 105.2" stroke="#555" stroke-width="0.7" fill="none"/>
</g>
<!-- view all -->
<g fill="none" stroke="#1e1e1e">
<path d="M753.8 736.5V732.9H757.4M763.6 732.9H767.2V736.5M753.8 742.2V745.8H757.4M767.2 742.4V744.5" stroke-width="1.9"/>
<circle cx="760.2" cy="739.2" r="4.8" stroke-width="2.3"/>
<path d="M763.6 743.1L768 748.8" stroke-width="2.7"/>
<!-- zoom in -->
<circle cx="793.1" cy="739.6" r="4.8" stroke-width="2.1"/>
<path d="M796.4 743.4L800.9 749" stroke-width="2.7"/>
<path d="M790.6 739.6H795.6M793.1 737.1V742.1" stroke-width="0.9"/>
<!-- zoom out -->
<circle cx="826.1" cy="739.6" r="4.8" stroke-width="2.1"/>
<path d="M829.4 743.4L833.9 749" stroke-width="2.7"/>
<path d="M823.6 739.4H828.6" stroke-width="0.9"/>
<!-- reset view -->
<path d="M855.4 736A8.1 8.1 0 1 1 853 742.7" stroke-width="1.9"/>
</g>
<path d="M852.8 733.9L852.3 740.1L858.8 738.4Z" fill="#1e1e1e"/>
<!-- view right/top/bottom/left -->
<g fill="none" stroke="#303030" stroke-width="1.3" stroke-linejoin="round">
<path d="M891.9 740.1L895.2 733.1L903.6 733.4L906.2 740.3L902.9 746.9L894.5 746.5ZM891.9 740.1H900.7L903.6 733.4M900.7 740.1L902.9 746.9"/>
<path d="M933.9 736.2L940.8 739V746.2L933.9 749.1L927.3 746.2V739ZM927.3 739L933.9 741.8L940.8 739M933.9 741.8V749.1"/>
<path d="M965.2 732.4L972.2 735.6V742.9L965.2 745.8L958.5 743.1V735.6ZM965.2 732.4V740.3L958.5 743.1M965.2 740.3L972.2 742.9"/>
<path d="M1009 740.1L1005.7 733.1L997.3 733.4L994.8 740.3L998.1 746.9L1006.4 746.5ZM1009 740.1H1000.2L997.3 733.4M1000.2 740.1L998.1 746.9"/>
</g>
<g fill="#111">
<path d="M909.9 740.3L905.4 738.2L906.6 740.3L905.4 742.4Z"/>
<path d="M933.9 731.8L931.5 736.6L933.9 735.4L936.3 736.6Z"/>
<path d="M965.2 749.9L962.8 745.2L965.2 746.4L967.6 745.2Z"/>
<path d="M991 740.3L995.6 738.2L994.4 740.3L995.6 742.4Z"/>
</g>
<!-- view front/back -->
<g stroke="#2b2b2b" stroke-width="1.4" stroke-linejoin="round">
<path d="M1033.1 734.5L1040.2 738.4V745.7L1033.1 749.5L1025.9 745.7V738.4Z" fill="#fff"/>
<path d="M1025.9 738.4L1033.1 741.9V749.5L1025.9 745.7Z" fill="#2b2b2b"/>
<path d="M1033.1 741.9L1040.2 738.4" fill="none"/>
<path d="M1066.1 734.5L1073.4 738.4V745.7L1066.1 749.5L1059 745.7V738.4Z" fill="#fdfdfd"/>
<path d="M1066.1 734.5L1073.4 738.4V745.7L1066.1 741.4Z" fill="#2b2b2b"/>
<path d="M1066.1 734.5V749.5M1066.1 741.4L1073.4 745.7" fill="none"/>
</g>
<!-- perspective / orthogonal -->
<g fill="none" stroke="#111" stroke-width="1.3" stroke-linejoin="round">
<path d="M1098.3 741.2H1109V749.6H1098.3ZM1098.3 741.2L1115.6 733.4L1109 741.2M1115.6 733.4L1109 749.6"/>
<path d="M1131.8 741.2H1141.2V749.6H1131.8ZM1136.4 735.6H1146.2V743.9H1136.4ZM1131.8 741.2L1136.4 735.6M1141.2 741.2L1146.2 735.6M1131.8 749.6L1136.4 743.9M1141.2 749.6L1146.2 743.9"/>
</g>
<!-- axes -->
<g fill="none" stroke="#111" stroke-width="1.1">
<path d="M1178.6 732.2V741.6H1189.9M1178.6 741.6L1171 748.9"/>
</g>
<circle cx="1179" cy="741.7" r="1.6" fill="#111"/>
<!-- scale markers -->
<g fill="none" stroke="#3a3a3a" stroke-width="1">
<path d="M1211.5 731.5V741.3H1222.8M1211.5 733H1213.5M1211.5 735.5H1213.5M1211.5 738H1213.5M1214.8 741.3V739.6M1217.7 741.3V739.6M1220.6 741.3V739.6"/>
<path d="M1211.5 741.3L1203.9 748.6" stroke="#555" stroke-width="1.6" stroke-dasharray="1 1"/>
</g>
<text x="1212.6" y="750" font-family="DejaVu Sans,Liberation Sans,sans-serif" font-size="8.6" fill="#3a3a3a">10</text>
<!-- edges -->
<g fill="none" stroke="#555" stroke-width="1.1">
<path d="M1241 737H1249.2M1241 747.4H1249.2M1238.9 739V745.4M1251.3 739V745.4"/>
</g>
<g fill="#222"><circle cx="1238.9" cy="737" r="1.3"/><circle cx="1251.3" cy="737" r="1.3"/><circle cx="1238.9" cy="747.4" r="1.3"/><circle cx="1251.3" cy="747.4" r="1.3"/></g>
<!-- splitter dots -->
<g fill="#bdbdbd"><rect x="1002" y="764" width="1" height="1"/><rect x="1005" y="764" width="1" height="1"/><rect x="1008" y="764" width="1" height="1"/><rect x="1011" y="764" width="1" height="1"/><rect x="1014" y="764" width="1" height="1"/><rect x="1017" y="764" width="1" height="1"/></g>
</svg>
<!-- splitter handles -->
<svg class="a" style="left:0;top:0;pointer-events:none" width="1920" height="1048" viewBox="0 0 1920 1048"><g fill="#b4b4b4"><rect x="666" y="535" width="1" height="1"/><rect x="666" y="538" width="1" height="1"/><rect x="666" y="541" width="1" height="1"/><rect x="666" y="544" width="1" height="1"/><rect x="666" y="547" width="1" height="1"/><rect x="666" y="550" width="1" height="1"/><rect x="1352" y="535" width="1" height="1"/><rect x="1352" y="538" width="1" height="1"/><rect x="1352" y="541" width="1" height="1"/><rect x="1352" y="544" width="1" height="1"/><rect x="1352" y="547" width="1" height="1"/><rect x="1352" y="550" width="1" height="1"/><rect x="960" y="891" width="1" height="1"/><rect x="960" y="894" width="1" height="1"/><rect x="960" y="897" width="1" height="1"/><rect x="960" y="900" width="1" height="1"/><rect x="960" y="903" width="1" height="1"/><rect x="960" y="906" width="1" height="1"/></g></svg>
<!-- console dock -->
<div class="t" style="left:674px;top:770px">Konsole</div>
<svg class="closebox" style="left:944px;top:772px" width="11" height="11" viewBox="0 0 11 11"><rect x="0.5" y="0.5" width="10" height="10" rx="2" ry="2" fill="#fbfbfb" stroke="#6a6864" stroke-width="1"/><path d="M2.8 2.8L8.2 8.2M8.2 2.8L2.8 8.2" stroke="#5c5a56" stroke-width="2" fill="none"/></svg>
<div class="frame" style="left:669px;top:787px;width:288px;height:239px;overflow:hidden">
<div class="t" style="left:4px;top:-1.5px">ACABCase.scad&#x27;.</div>
<div class="t" style="left:4px;top:13.3px">Loaded design &#x27;/home/sebi/temp/</div>
<div class="t" style="left:4px;top:28.1px">ACABCase/ACABCase.scad&#x27;.</div>
<div class="t" style="left:4px;top:42.9px">Compiling design (CSG Tree generation)...</div>
<div class="t" style="left:4px;top:57.7px">Compiling design (CSG Products</div>
<div class="t" style="left:4px;top:72.5px">generation)...</div>
<div class="t" style="left:4px;top:87.3px">Geometries in cache: 211</div>
<div class="t" style="left:4px;top:102.1px">Geometry cache size in bytes: 49989112</div>
<div class="t" style="left:4px;top:116.9px">CGAL Polyhedrons in cache: 0</div>
<div class="t" style="left:4px;top:131.7px">CGAL cache size in bytes: 0</div>
<div class="t" style="left:4px;top:146.5px">Compiling design (CSG Products</div>
<div class="t" style="left:4px;top:161.3px">normalization)...</div>
<div class="t" style="left:4px;top:176.1px">Normalized tree has 4 elements!</div>
<div class="t" style="left:4px;top:190.9px">Compile and preview finished.</div>
<div class="t" style="left:4px;top:205.7px">Total rendering time: 0:00:00.055</div>
<div class="a" style="left:272px;top:-1px;width:15px;height:239px;border:1px solid #c0c0c0;background:#e6e6e6"></div>
<div class="a" style="left:273px;top:0;width:13px;height:14px;background:linear-gradient(90deg,#fff,#f1f1f1);border-bottom:1px solid #d0d0d0"></div>
<div class="a" style="left:273px;top:196px;width:13px;height:28px;background:linear-gradient(90deg,#fff,#f1f1f1);border-top:1px solid #c0c0c0;border-bottom:1px solid #c0c0c0"></div>
<div class="a" style="left:273px;top:224px;width:13px;height:13px;background:linear-gradient(90deg,#fff,#f1f1f1)"></div>
<div class="tri-u" style="left:275px;top:4px"></div><div class="tri-d" style="left:275px;top:228px"></div>
</div>
<!-- error list dock -->
<div class="t" style="left:967px;top:770px">Fehlerliste</div>
<svg class="closebox" style="left:1336px;top:772px" width="11" height="11" viewBox="0 0 11 11"><rect x="0.5" y="0.5" width="10" height="10" rx="2" ry="2" fill="#fbfbfb" stroke="#6a6864" stroke-width="1"/><path d="M2.8 2.8L8.2 8.2M8.2 2.8L2.8 8.2" stroke="#5c5a56" stroke-width="2" fill="none"/></svg>
<div class="t" style="left:972px;top:800px">Anzeigen</div>
<div class="btn" style="left:1034px;top:796px;width:144px;height:23px;text-align:left;padding:4px 0 0 4px">Alles</div><div class="tri-d" style="left:1162px;top:806px"></div>
<div class="frame" style="left:972px;top:825px;width:368px;height:192px;overflow:hidden">
<div class="a" style="left:0;top:0;width:366px;height:19px;background:linear-gradient(#fff,#f0f0f0);border-bottom:1px solid #c2c2c2"></div>
<div class="a" style="left:79px;top:0;width:1px;height:18px;background:#c8c8c8"></div>
<div class="a" style="left:279px;top:0;width:1px;height:18px;background:#c8c8c8"></div>
<div class="a" style="left:359px;top:0;width:1px;height:18px;background:#c8c8c8"></div>
<div class="t" style="left:0px;top:2px;width:79px;text-align:center">Group</div>
<div class="t" style="left:80px;top:2px;width:199px;text-align:center">File</div>
<div class="t" style="left:280px;top:2px;width:79px;text-align:center">Line</div>
<div class="a" style="left:-1px;top:176px;width:368px;height:15px;border:1px solid #c0c0c0;background:#e6e6e6"></div>
<div class="a" style="left:0;top:177px;width:14px;height:13px;background:linear-gradient(#fff,#f1f1f1);border-right:1px solid #c0c0c0"></div>
<div class="a" style="left:14px;top:177px;width:170px;height:13px;background:linear-gradient(#fff,#f1f1f1);border-right:1px solid #c0c0c0"></div>
<div class="a" style="left:352px;top:177px;width:14px;height:13px;background:linear-gradient(#fff,#f1f1f1);border-left:1px solid #c0c0c0"></div>
<div class="a" style="left:4px;top:179px;width:0;height:0;border-top:4px solid transparent;border-bottom:4px solid transparent;border-right:4px solid #4a4a4a"></div>
<div class="a" style="left:358px;top:179px;width:0;height:0;border-top:4px solid transparent;border-bottom:4px solid transparent;border-left:4px solid #4a4a4a"></div>
</div>
<!-- customizer dock -->
<div class="t" style="left:1359px;top:59px">Customizer</div>
<svg class="closebox" style="left:1907px;top:61px" width="11" height="11" viewBox="0 0 11 11"><rect x="0.5" y="0.5" width="10" height="10" rx="2" ry="2" fill="#fbfbfb" stroke="#6a6864" stroke-width="1"/><path d="M2.8 2.8L8.2 8.2M8.2 2.8L2.8 8.2" stroke="#5c5a56" stroke-width="2" fill="none"/></svg>
<div class="a" style="left:1355px;top:84px;width:14px;height:14px;border:1px solid #a8a8a8;border-radius:2px;background:#fff"></div>
<svg class="a" style="left:1355px;top:84px" width="14" height="14" viewBox="0 0 14 14"><path d="M3 6.6L5.7 10.4L10.6 2.8" fill="none" stroke="#000" stroke-width="1.9"/></svg>
<div class="t" style="left:1374px;top:84px">Automatische Vorschau</div>
<div class="btn" style="left:1543px;top:80px;width:185px;height:23px;text-align:left;padding:4px 0 0 4px">Details anzeigen</div><div class="tri-d" style="left:1712px;top:90px"></div>
<div class="btn" style="left:1732px;top:80px;width:184px;height:23px;padding-top:4px">Zurücksetzen</div>
<div class="edit" style="left:1355px;top:107px;width:201px;height:26px;padding:6px 0 0 3.5px;line-height:15px">Standardwerte des Designs</div>
<div class="a" style="left:1536px;top:108px;width:19px;height:24px;border-left:1px solid #c4c4c4;background:linear-gradient(#fbfbfb,#ededed);border-radius:0 2px 2px 0"></div><div class="tri-d" style="left:1541px;top:119px"></div>
<div class="btn" style="left:1570px;top:107px;width:40px;height:26px;padding-top:6px">+</div>
<div class="btn" style="left:1614px;top:107px;width:40px;height:26px;padding-top:6px">-</div>
<div class="edit" style="left:1658px;top:107px;width:258px;height:26px;padding:3px 0 0 3px;font-size:15px;line-height:19px">aktuelle Voreinstellung speichern</div>
<div class="a" style="left:1355px;top:138px;width:561px;height:888px;border:1px solid #b6b6b6"></div>
<div class="a" style="left:1356px;top:139px;width:559px;height:22px;border:1px solid #b0b0b0;border-radius:3px;background:#dcdcdc"></div>
<div class="tri-d" style="left:1363px;top:147px"></div>
<div class="t" style="left:1377px;top:142px">Parameters</div>
<div class="pn" style="top:161px">generatePart</div><div class="pd" style="top:176px">Witch Part should be generated?</div>
<div class="btn" style="left:1360px;top:191px;width:551px;height:23px;text-align:left;padding:4px 0 0 4px">Front Part</div><div class="tri-d" style="left:1895px;top:201px"></div>
<div class="pn" style="top:214px">width</div><div class="pd" style="top:229px">Over all width of the box</div>
<div class="spin" style="left:1853px;top:218px;width:58px"><div class="v">100</div><div class="s"></div><div class="tri-u" style="right:3px;top:4px;border-left-width:4px;border-right-width:4px;border-bottom-width:4px;border-bottom-color:#555"></div><div class="tri-d" style="right:3px;top:11px;border-left-width:4px;border-right-width:4px;border-top-width:4px;border-top-color:#555"></div></div>
<div class="pn" style="top:244px">height</div><div class="pd" style="top:259px">Over all height of the box</div>
<div class="spin" style="left:1853px;top:248px;width:58px"><div class="v">30</div><div class="s"></div><div class="tri-u" style="right:3px;top:4px;border-left-width:4px;border-right-width:4px;border-bottom-width:4px;border-bottom-color:#555"></div><div class="tri-d" style="right:3px;top:11px;border-left-width:4px;border-right-width:4px;border-top-width:4px;border-top-color:#555"></div></div>
<div class="pn" style="top:274px">depth</div><div class="pd" style="top:289px">Over all depth of the box</div>
<div class="spin" style="left:1853px;top:278px;width:58px"><div class="v">80</div><div class="s"></div><div class="tri-u" style="right:3px;top:4px;border-left-width:4px;border-right-width:4px;border-bottom-width:4px;border-bottom-color:#555"></div><div class="tri-d" style="right:3px;top:11px;border-left-width:4px;border-right-width:4px;border-top-width:4px;border-top-color:#555"></div></div>
<div class="pn" style="top:304px">caseThickness</div><div class="pd" style="top:319px">Thickness of the walls of the box minimum</div>
<div class="spin" style="left:1853px;top:308px;width:58px"><div class="v">2</div><div class="s"></div><div class="tri-u" style="right:3px;top:4px;border-left-width:4px;border-right-width:4px;border-bottom-width:4px;border-bottom-color:#555"></div><div class="tri-d" style="right:3px;top:11px;border-left-width:4px;border-right-width:4px;border-top-width:4px;border-top-color:#555"></div></div>
<div class="pn" style="top:334px">bevelRadius</div><div class="pd" style="top:349px">Bevel on the edges of the box</div>
<div class="spin" style="left:1853px;top:338px;width:58px"><div class="v">5</div><div class="s"></div><div class="tri-u" style="right:3px;top:4px;border-left-width:4px;border-right-width:4px;border-bottom-width:4px;border-bottom-color:#555"></div><div class="tri-d" style="right:3px;top:11px;border-left-width:4px;border-right-width:4px;border-top-width:4px;border-top-color:#555"></div></div>
<div class="pn" style="top:364px">feetOffsetDepth</div><div class="pd" style="top:379px">Feet distance from the depth</div>
<div class="spin" style="left:1853px;top:368px;width:58px"><div class="v">10</div><div class="s"></div><div class="tri-u" style="right:3px;top:4px;border-left-width:4px;border-right-width:4px;border-bottom-width:4px;border-bottom-color:#555"></div><div class="tri-d" style="right:3px;top:11px;border-left-width:4px;border-right-width:4px;border-top-width:4px;border-top-color:#555"></div></div>
<div class="pn" style="top:394px">feetOffsetWidth</div><div class="pd" style="top:409px">Feet distance from the width</div>
<div class="spin" style="left:1853px;top:398px;width:58px"><div class="v">10</div><div class="s"></div><div class="tri-u" style="right:3px;top:4px;border-left-width:4px;border-right-width:4px;border-bottom-width:4px;border-bottom-color:#555"></div><div class="tri-d" style="right:3px;top:11px;border-left-width:4px;border-right-width:4px;border-top-width:4px;border-top-color:#555"></div></div>
<div class="pn" style="top:424px">feetDiameter</div><div class="pd" style="top:439px">feet Diameter</div>
<div class="spin" style="left:1853px;top:428px;width:58px"><div class="v">4</div><div class="s"></div><div class="tri-u" style="right:3px;top:4px;border-left-width:4px;border-right-width:4px;border-bottom-width:4px;border-bottom-color:#555"></div><div class="tri-d" style="right:3px;top:11px;border-left-width:4px;border-right-width:4px;border-top-width:4px;border-top-color:#555"></div></div>
<div class="pn" style="top:454px">feetHeight</div><div class="pd" style="top:469px">feet Height</div>
<div class="spin" style="left:1853px;top:458px;width:58px"><div class="v">1</div><div class="s"></div><div class="tri-u" style="right:3px;top:4px;border-left-width:4px;border-right-width:4px;border-bottom-width:4px;border-bottom-color:#555"></div><div class="tri-d" style="right:3px;top:11px;border-left-width:4px;border-right-width:4px;border-top-width:4px;border-top-color:#555"></div></div>
<div class="pn" style="top:484px">mountBrecketDepth</div><div class="pd" style="top:499px">Depth of the mounting plate</div>
<div class="spin" style="left:1853px;top:488px;width:58px"><div class="v">10</div><div class="s"></div><div class="tri-u" style="right:3px;top:4px;border-left-width:4px;border-right-width:4px;border-bottom-width:4px;border-bottom-color:#555"></div><div class="tri-d" style="right:3px;top:11px;border-left-width:4px;border-right-width:4px;border-top-width:4px;border-top-color:#555"></div></div>
<div class="pn" style="top:514px">facePlateDepth</div><div class="pd" style="top:529px">Depth of the Faceplate</div>
<div class="spin" style="left:1841px;top:518px;width:70px"><div class="v">0,5</div><div class="s"></div><div class="tri-u" style="right:3px;top:4px;border-left-width:4px;border-right-width:4px;border-bottom-width:4px;border-bottom-color:#555"></div><div class="tri-d" style="right:3px;top:11px;border-left-width:4px;border-right-width:4px;border-top-width:4px;border-top-color:#555"></div></div>
<div class="pn" style="top:544px">fn</div><div class="pd" style="top:559px">Technical: Resolution of curves (Fast 10, fkne 100)</div>
<div class="spin" style="left:1853px;top:548px;width:58px"><div class="v">100</div><div class="s"></div><div class="tri-u" style="right:3px;top:4px;border-left-width:4px;border-right-width:4px;border-bottom-width:4px;border-bottom-color:#555"></div><div class="tri-d" style="right:3px;top:11px;border-left-width:4px;border-right-width:4px;border-top-width:4px;border-top-color:#555"></div></div>
<div class="pn" style="top:574px">extra</div><div class="pd" style="top:589px">Technical: Extra size for cutouts</div>
<div class="spin" style="left:1841px;top:578px;width:70px"><div class="v">0,2</div><div class="s"></div><div class="tri-u" style="right:3px;top:4px;border-left-width:4px;border-right-width:4px;border-bottom-width:4px;border-bottom-color:#555"></div><div class="tri-d" style="right:3px;top:11px;border-left-width:4px;border-right-width:4px;border-top-width:4px;border-top-color:#555"></div></div>
</body>
</html>
